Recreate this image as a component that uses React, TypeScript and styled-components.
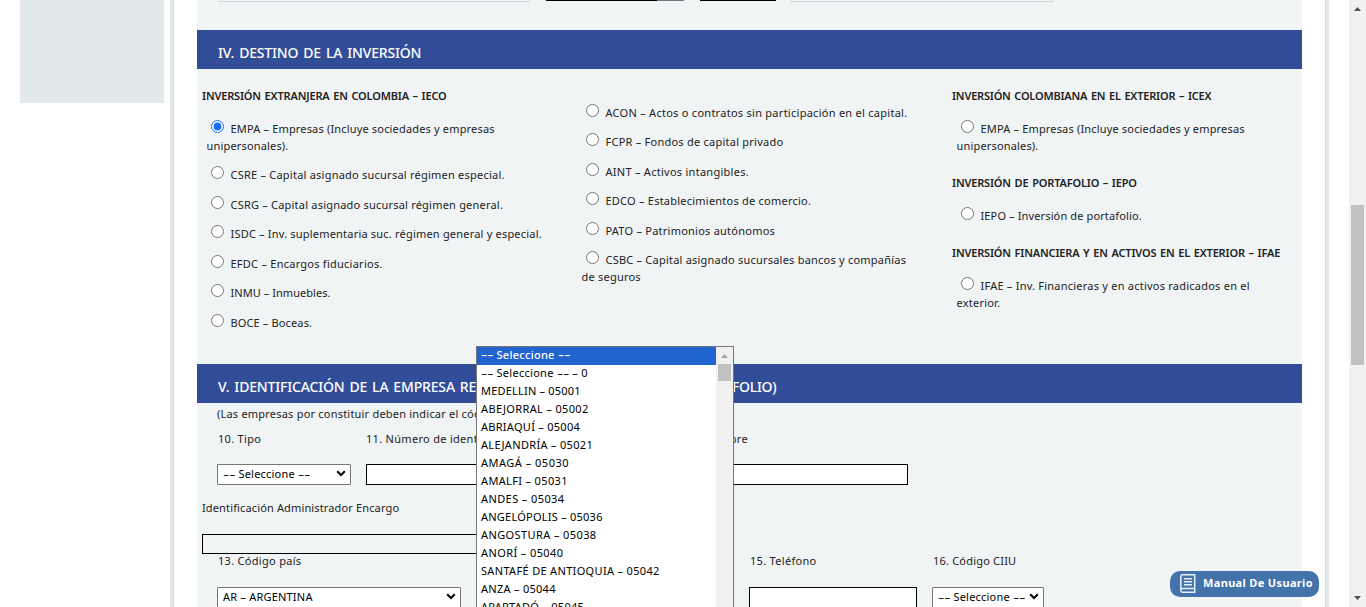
import React from 'react';
import styled, { createGlobalStyle } from 'styled-components';

const GlobalStyle = createGlobalStyle`
  * { box-sizing: border-box; }
  body {
    margin: 0;
    overflow: hidden;
    background: #fff;
    color: #222;
    font-family: 'Noto Sans', sans-serif;
    font-size: 11px;
    line-height: 17px;
    letter-spacing: 0.21px;
  }
`;

const Page = styled.div`
  display: flex;
  height: 607px;
  overflow: hidden;
`;

const Sidebar = styled.aside`
  width: 170px;
  padding-left: 20px;
`;

const SideBlock = styled.div`
  width: 144px;
  height: 103px;
  background: #e1e9ea;
`;

const Frame = styled.div`
  width: 1159px;
  padding: 0 24px 0 24px;
  border-left: 3px solid #e1e9ea;
  border-right: 3px solid #e1e9ea;
  box-shadow: inset 1px 0 #d3dbdd, inset -1px 0 #d3dbdd;
`;

const Form = styled.main`
  width: 1105px;
  height: 607px;
  overflow: hidden;
  background: #f0f4f5;
`;

const PreviousRow = styled.div`
  display: flex;
  height: 30px;
  padding-left: 20px;
`;

const FieldEdge = styled.span<{ $w: number; $gap?: number; $color?: string }>`
  width: ${p => p.$w}px;
  height: ${p => (p.$color ? 1 : 2)}px;
  margin-right: ${p => p.$gap ?? 0}px;
  border-bottom: 1px solid ${p => p.$color ?? '#cfd5d6'};
  border-radius: ${p => (p.$color ? 0 : '0 0 2px 2px')};
`;

const SectionTitle = styled.h2`
  display: flex;
  height: 39px;
  margin: 0;
  padding: 4px 0 0 21px;
  background: #324d98;
  color: #fff;
  font-size: 14px;
  font-weight: 500;
  line-height: 38px;
  letter-spacing: -0.17px;
  word-spacing: 1.5px;
  white-space: nowrap;
`;

const TitleStart = styled.span`
  width: 514px;
`;

const TitleEnd = styled.span`
  letter-spacing: -0.3px;
`;

const Columns = styled.div`
  display: grid;
  grid-template-columns: 375px 375px 1fr;
  height: 295px;
  padding-left: 5px;
`;

const Column = styled.div<{ $top: number }>`
  padding-top: ${p => p.$top}px;
`;

const GroupTitle = styled.h3<{ $top?: number; $ls?: number }>`
  margin: ${p => p.$top ?? 0}px 0 16px;
  font-size: 11px;
  font-weight: 600;
  line-height: 17px;
  letter-spacing: ${p => p.$ls ?? -0.17}px;
  word-spacing: 1px;
  white-space: nowrap;
`;

const Option = styled.label<{ $ls?: number }>`
  display: block;
  margin: 0 0 12.5px 4.5px;
  line-height: 17px;
  letter-spacing: ${p => p.$ls ?? 0.21}px;
  white-space: nowrap;
`;

const Radio = styled.input.attrs({ type: 'radio' })`
  width: 13px;
  height: 13px;
  margin: -4px 6.5px 0 4.5px;
  vertical-align: 0;
  accent-color: #1a6dff;
`;

const Note = styled.p`
  margin: 0;
  padding: 2px 0 0 20px;
  white-space: nowrap;
`;

const LabelRow = styled.div<{ $top: number; $cols: string }>`
  display: grid;
  grid-template-columns: ${p => p.$cols};
  margin-top: ${p => p.$top}px;
  padding-left: 21px;
  white-space: nowrap;
`;

const LabelCell = styled.span<{ $end?: boolean; $ls?: number }>`
  text-align: ${p => (p.$end ? 'right' : 'left')};
  letter-spacing: ${p => p.$ls ?? 0.3}px;
`;

const FieldRow = styled.div<{ $top: number; $left?: number }>`
  display: flex;
  padding: ${p => p.$top}px 0 0 ${p => p.$left ?? 20}px;
`;

const TextField = styled.div<{ $w: number; $gap?: number; $off?: boolean }>`
  width: ${p => p.$w}px;
  height: ${p => (p.$off ? 20 : 21)}px;
  margin-right: ${p => p.$gap ?? 0}px;
  border: 1px solid #000;
  background: ${p => (p.$off ? '#eff3f4' : '#fff')};
`;

const SelectBox = styled.div<{ $w: number; $gap: number }>`
  display: flex;
  align-items: center;
  justify-content: space-between;
  width: ${p => p.$w}px;
  height: 21px;
  margin-right: ${p => p.$gap}px;
  padding: 0 4px 2px 5px;
  border: 1px solid #767676;
  border-radius: 1px;
  background: #fff;
  color: #000;
  white-space: nowrap;
`;

const AdminLabel = styled.div`
  padding: 14px 0 0 5px;
  letter-spacing: 0.14px;
`;

const Dashes = styled.span`
  display: inline-block;
  margin-right: 5.3px;
  letter-spacing: 0;
  transform: scaleX(1.75);
  transform-origin: 0 50%;
`;

const Dropdown = styled.div`
  position: absolute;
  left: 476px;
  top: 346px;
  display: flex;
  width: 258px;
  height: 280px;
  border: 1px solid #767676;
  background: #fff;
`;

const OptionList = styled.div`
  flex: 1;
`;

const ListItem = styled.div<{ $active?: boolean; $ls?: number }>`
  height: 18px;
  padding-left: 4px;
  background: ${p => (p.$active ? '#2163cf' : '#fff')};
  color: ${p => (p.$active ? '#fff' : '#000')};
  font-weight: ${p => (p.$active ? 500 : 400)};
  line-height: 15px;
  letter-spacing: ${p => p.$ls ?? 0.28}px;
  white-space: nowrap;
`;

const ListScroll = styled.div`
  width: 17px;
  padding: 7px 2px 0 2px;
  background: #f1f1f1;
`;

const ListThumb = styled.div`
  height: 17px;
  margin-top: 6px;
  background: #c1c1c1;
`;

const PageScroll = styled.div`
  display: flex;
  flex-direction: column;
  align-items: center;
  width: 17px;
  height: 607px;
  margin-left: 20px;
  padding: 7px 0 7px;
  background: #f1f1f1;
`;

const PageThumb = styled.div`
  width: 13px;
  height: 160px;
  margin: 194px 0 auto;
  background: #c1c1c1;
`;

const Arrow = styled.div<{ $down?: boolean; $color: string }>`
  width: 7px;
  height: 4px;
  margin: 0 auto;
  flex: none;
  background: ${p => p.$color};
  clip-path: ${p => (p.$down ? 'polygon(0 0, 100% 0, 50% 100%)' : 'polygon(50% 0, 100% 100%, 0 100%)')};
`;

const ManualButton = styled.button`
  position: absolute;
  left: 1170px;
  top: 571px;
  display: flex;
  align-items: center;
  width: 149px;
  height: 26px;
  padding: 0 0 3px 10px;
  border: 0;
  border-radius: 10px;
  background: #4472aa;
  color: #fff;
  font: 700 11px/17px 'Noto Sans', sans-serif;
  letter-spacing: 0.34px;
  white-space: nowrap;
`;

const BookIcon = styled.svg`
  width: 16px;
  height: 19px;
  margin: 2px 7px 0 0;
`;

const Chevron = () => (
  <svg width="10" height="7" viewBox="0 0 10 7" fill="none">
    <path d="M1.2 1.3 5 5 8.8 1.3" stroke="#000" strokeWidth="2" />
  </svg>
);

const Placeholder = () => (
  <span>
    <Dashes>--</Dashes> Seleccione <Dashes>--</Dashes>
  </span>
);

type Item = { text: string; more?: string; ls?: number; checked?: boolean };

const ieco: Item[] = [
  { text: 'EMPA – Empresas (Incluye sociedades y empresas', more: 'unipersonales).', ls: 0.17, checked: true },
  { text: 'CSRE – Capital asignado sucursal régimen especial.', ls: 0.23 },
  { text: 'CSRG – Capital asignado sucursal régimen general.', ls: 0.21 },
  { text: 'ISDC – Inv. suplementaria suc. régimen general y especial.', ls: 0.2 },
  { text: 'EFDC – Encargos fiduciarios.', ls: 0.25 },
  { text: 'INMU – Inmuebles.', ls: 0.05 },
  { text: 'BOCE – Boceas.', ls: 0.14 },
];

const others: Item[] = [
  { text: 'ACON – Actos o contratos sin participación en el capital.', ls: 0.27 },
  { text: 'FCPR – Fondos de capital privado', ls: 0.24 },
  { text: 'AINT – Activos intangibles.', ls: 0.27 },
  { text: 'EDCO – Establecimientos de comercio.', ls: 0.23 },
  { text: 'PATO – Patrimonios autónomos', ls: 0.24 },
  { text: 'CSBC – Capital asignado sucursales bancos y compañías', more: 'de seguros', ls: 0.22 },
];

const cities: [string, number?][] = [
  ['MEDELLIN – 05001', 0.2],
  ['ABEJORRAL – 05002', 0.35],
  ['ABRIAQUÍ – 05004'],
  ['ALEJANDRÍA – 05021', 0.32],
  ['AMAGÁ – 05030', 0.5],
  ['AMALFI – 05031', 0.35],
  ['ANDES – 05034', 0.4],
  ['ANGELÓPOLIS – 05036', 0.24],
  ['ANGOSTURA – 05038', 0.4],
  ['ANORÍ – 05040', 0.4],
  ['SANTAFÉ DE ANTIOQUIA – 05042', 0.33],
  ['ANZA – 05044'],
  ['APARTADÓ – 05045'],
];

const RadioOption = ({ item }: { item: Item }) => (
  <Option $ls={item.ls}>
    <Radio name="destino" defaultChecked={item.checked} />
    {item.text}
    {item.more && (
      <>
        <br />
        {item.more}
      </>
    )}
  </Option>
);

export default function App() {
  return (
    <>
      <GlobalStyle />
      <Page>
        <Sidebar>
          <SideBlock />
        </Sidebar>
        <Frame>
          <Form>
            <PreviousRow>
              <FieldEdge $w={314} $gap={15} />
              <FieldEdge $w={111} $color="#000" />
              <FieldEdge $w={27} $gap={16} $color="#767680" />
              <FieldEdge $w={76} $gap={14} $color="#000" />
              <FieldEdge $w={264} />
            </PreviousRow>
            <SectionTitle>IV. DESTINO DE LA INVERSIÓN</SectionTitle>
            <Columns>
              <Column $top={17.6}>
                <GroupTitle>INVERSIÓN EXTRANJERA EN COLOMBIA – IECO</GroupTitle>
                {ieco.map(i => <RadioOption key={i.text} item={i} />)}
              </Column>
              <Column $top={34.6}>
                {others.map(i => <RadioOption key={i.text} item={i} />)}
              </Column>
              <Column $top={18}>
                <GroupTitle $ls={-0.2}>INVERSIÓN COLOMBIANA EN EL EXTERIOR – ICEX</GroupTitle>
                <RadioOption item={{ text: 'EMPA – Empresas (Incluye sociedades y empresas', more: 'unipersonales).', ls: 0.17 }} />
                <GroupTitle $top={20}>INVERSIÓN DE PORTAFOLIO – IEPO</GroupTitle>
                <RadioOption item={{ text: 'IEPO – Inversión de portafolio.', ls: 0.13 }} />
                <GroupTitle $top={20} $ls={-0.17}>INVERSIÓN FINANCIERA Y EN ACTIVOS EN EL EXTERIOR – IFAE</GroupTitle>
                <RadioOption item={{ text: 'IFAE – Inv. Financieras y en activos radicados en el', more: 'exterior.', ls: 0.23 }} />
              </Column>
            </Columns>
            <SectionTitle>
              <TitleStart>V. IDENTIFICACIÓN DE LA EMPRESA RECEPTORA (PORTA</TitleStart>
              <TitleEnd>FOLIO)</TitleEnd>
            </SectionTitle>
            <Note>(Las empresas por constituir deben indicar el código)</Note>
            <LabelRow $top={8} $cols="148px 200px 182px">
              <LabelCell>10. Tipo</LabelCell>
              <LabelCell>11. Número de identificación</LabelCell>
              <LabelCell $end>12. Nombre</LabelCell>
            </LabelRow>
            <FieldRow $top={17}>
              <SelectBox $w={134} $gap={15}><Placeholder /><Chevron /></SelectBox>
              <TextField $w={150} $gap={15} />
              <TextField $w={377} />
            </FieldRow>
            <AdminLabel>Identificación Administrador Encargo</AdminLabel>
            <FieldRow $top={18} $left={5}>
              <TextField $w={400} $off />
            </FieldRow>
            <LabelRow $top={-2} $cols="532px 183px 1fr">
              <LabelCell>13. Código país</LabelCell>
              <LabelCell>15. Teléfono</LabelCell>
              <LabelCell $ls={0.2}>16. Código CIIU</LabelCell>
            </LabelRow>
            <FieldRow $top={18}>
              <SelectBox $w={244} $gap={288}><span>AR – ARGENTINA</span><Chevron /></SelectBox>
              <TextField $w={168} $gap={15} />
              <SelectBox $w={112} $gap={0}><Placeholder /><Chevron /></SelectBox>
            </FieldRow>
          </Form>
        </Frame>
        <PageScroll>
          <Arrow $color="#505050" />
          <PageThumb />
          <Arrow $down $color="#505050" />
        </PageScroll>
        <Dropdown>
          <OptionList>
            <ListItem $active><Placeholder /></ListItem>
            <ListItem><Placeholder /> – 0</ListItem>
            {cities.map(([name, ls]) => <ListItem key={name} $ls={ls}>{name}</ListItem>)}
          </OptionList>
          <ListScroll>
            <Arrow $color="#a3a3a3" />
            <ListThumb />
          </ListScroll>
        </Dropdown>
        <ManualButton>
          <BookIcon viewBox="0 0 16 19" fill="none" stroke="#e6eef7" strokeWidth="1.5">
            <path d="M14.700 14.500V.8H2.500C1.400.8.8 1.400.8 2.500v14c0 1.100.7 1.700 1.700 1.700h12.800M.8 16c0-1 .7-1.500 1.700-1.500h12.200M14.700 14.500v3.500" />
            <path d="M4 4.700h8M4 7.700h8M4 10.700h8" />
          </BookIcon>
          Manual De Usuario
        </ManualButton>
      </Page>
    </>
  );
}
